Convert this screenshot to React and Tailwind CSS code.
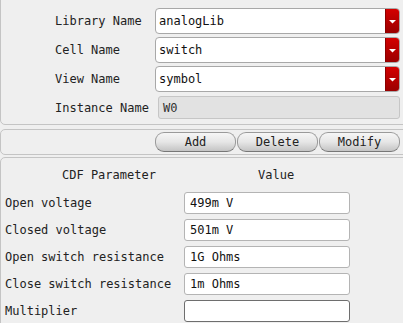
const mono = { fontFamily: '"DejaVu Sans Mono", "Liberation Mono", monospace' };

function Combo({ label, value }) {
  return (
    <div className="flex items-center h-[26px]">
      <span className="w-[100px] shrink-0">{label}</span>
      <div className="flex h-[26px] w-[245px] rounded-[4px] border border-[#a8a8a8] bg-white overflow-hidden">
        <span className="flex-1 flex items-center pl-[3px] text-[#111]">{value}</span>
        <span className="w-[14px] flex items-center justify-center bg-gradient-to-b from-[#d40000] to-[#9a0000] border-l border-[#8a0000]">
          <svg width="7" height="5" viewBox="0 0 7 5">
            <path d="M0 1 L7 1 L3.5 4.5 Z" fill="#fff" />
          </svg>
        </span>
      </div>
    </div>
  );
}

function Btn({ children }) {
  return (
    <button className="w-[81px] h-[20px] rounded-[9px] border border-[#9a9a9a] border-b-[#777] bg-gradient-to-b from-[#f6f6f6] via-[#e6e6e6] to-[#c4c4c4] text-[#222] text-[12px] leading-none">
      {children}
    </button>
  );
}

function ParamRow({ label, value, focus }) {
  return (
    <div className="flex items-center h-[22px]">
      <span className="w-[179px] shrink-0">{label}</span>
      <div
        className={
          'h-[22px] w-[166px] rounded-[3px] bg-white flex items-center pl-[5px] text-[#111] border ' +
          (focus ? 'border-[#6e6e6e]' : 'border-[#b4b4b4]')
        }
      >
        {value}
      </div>
    </div>
  );
}

export default function App() {
  return (
    <div className="w-[403px] h-[323px] overflow-hidden bg-[#efefef] text-[12px] text-[#222]" style={mono}>
      <div className="-mt-[10px] w-[412px] rounded-[5px] border border-[#c4c4c4] pt-[17px] pb-[5px] pl-[54px]">
        <div className="flex flex-col gap-[3px]">
          <Combo label="Library Name" value="analogLib" />
          <Combo label="Cell Name" value="switch" />
          <Combo label="View Name" value="symbol" />
          <div className="flex items-center h-[23px] mt-[1px]">
            <span className="w-[103px] shrink-0">Instance Name</span>
            <div className="h-[23px] w-[242px] rounded-[3px] border border-[#c6c6c6] bg-[#e2e2e2] flex items-center pl-[4px] text-[#333]">
              W0
            </div>
          </div>
        </div>
      </div>
      <div className="mt-[4px] w-[412px] h-[26px] rounded-[5px] border border-[#c4c4c4] flex items-center pl-[154px] gap-[1px]">
        <Btn>Add</Btn>
        <Btn>Delete</Btn>
        <Btn>Modify</Btn>
      </div>
      <div className="mt-[2px] w-[412px] h-[200px] rounded-[5px] border border-[#c4c4c4] pl-[4px]">
        <div className="flex items-center h-[34px]">
          <span className="pl-[57px] w-[253px] shrink-0">CDF Parameter</span>
          <span>Value</span>
        </div>
        <div className="flex flex-col gap-[5px]">
          <ParamRow label="Open voltage" value="499m V" />
          <ParamRow label="Closed voltage" value="501m V" />
          <ParamRow label="Open switch resistance" value="1G Ohms" />
          <ParamRow label="Close switch resistance" value="1m Ohms" />
          <ParamRow label="Multiplier" value="" focus />
        </div>
      </div>
    </div>
  );
}
